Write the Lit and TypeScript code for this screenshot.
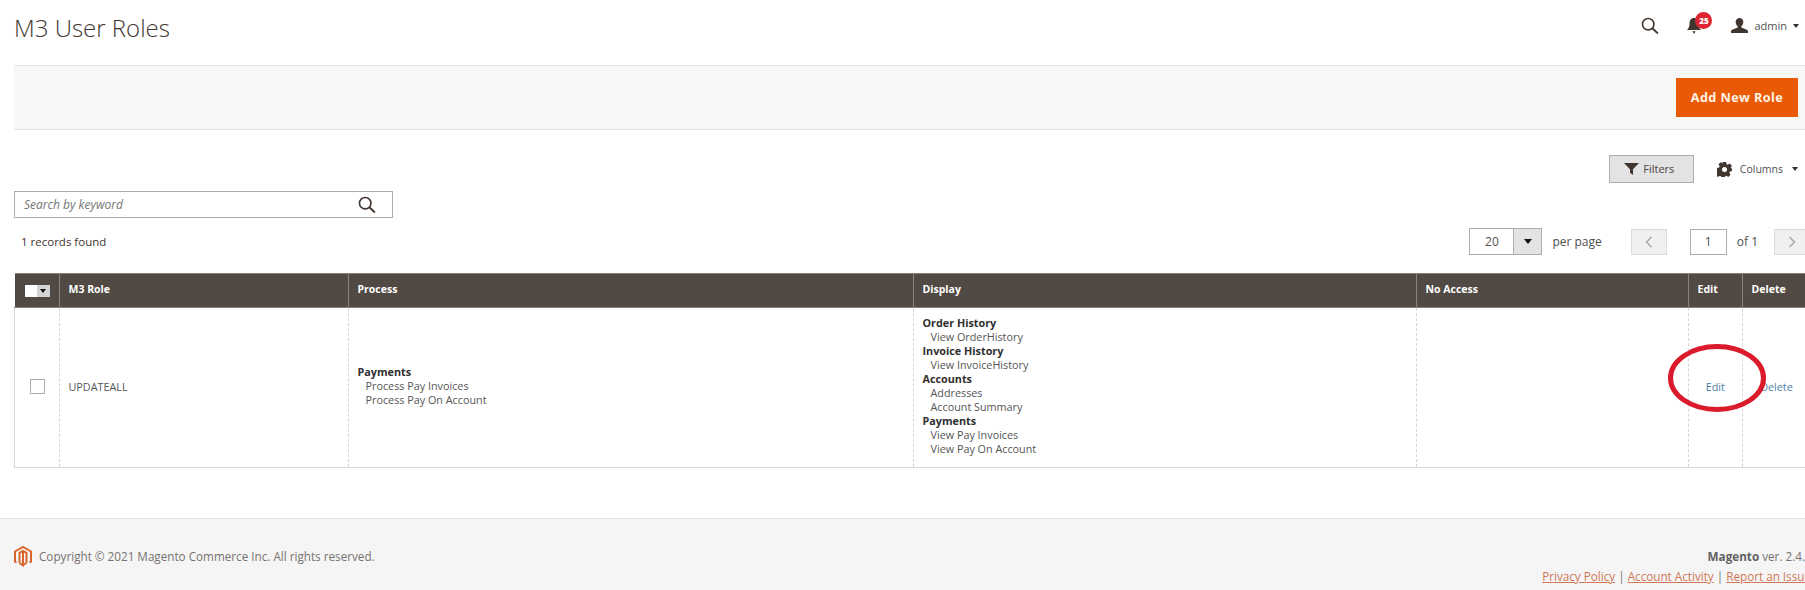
import { LitElement, html, css } from "lit";
import { customElement } from "lit/decorators.js";

const searchIcon = html`<svg width="18" height="17" viewBox="0 0 20 19" fill="none" stroke="#41362f" stroke-width="1.800">
  <circle cx="8" cy="8" r="6.400"></circle><path d="M12.600 12.600 18.800 18.400" stroke-width="2.100"></path></svg>`;

@customElement("app-root")
export class AppRoot extends LitElement {
  static styles = css`
    :host {
      display: block;
      width: 1805px;
      height: 590px;
      overflow: hidden;
      position: relative;
      background: #fff;
      font-family: "Open Sans", sans-serif;
      font-size: 11.5px;
      line-height: 14px;
      color: #41362f;
    }
    .header {
      height: 65px;
      box-sizing: border-box;
      display: flex;
      align-items: center;
      justify-content: space-between;
      padding: 0 6px 9px 14px;
    }
    h1 {
      margin: 0;
      font-size: 24px;
      font-weight: 300;
      line-height: 32px;
      color: #41362f;
    }
    .user-bar { display: flex; align-items: center; margin-bottom: 5px; }
    .bell { position: relative; display: flex; margin: 0 19px 0 28px; width: 25px; }
    .badge {
      position: absolute;
      left: 8px;
      top: -5px;
      width: 17px;
      height: 17px;
      border-radius: 50%;
      background: #dc2530;
      color: #fff;
      font-size: 8px;
      font-weight: 800;
      line-height: 17px;
      text-align: center;
    }
    .admin { font-size: 11px; color: #4f4f4f; margin: 0 6px 0 6px; }
    .caret {
      width: 0;
      height: 0;
      border-left: 3.5px solid transparent;
      border-right: 3.5px solid transparent;
      border-top: 4px solid #303030;
    }
    .actions {
      margin-left: 14px;
      height: 65px;
      box-sizing: border-box;
      background: #f8f8f8;
      border-top: 1px solid #e3e3e3;
      border-bottom: 1px solid #e3e3e3;
      display: flex;
      align-items: center;
      justify-content: flex-end;
      padding: 0 7px 1px 0;
    }
    .add {
      width: 122px;
      height: 39px;
      background: #e95a07;
      color: #fff3e4;
      font-size: 12.7px;
      font-weight: 700;
      letter-spacing: 0.4px;
      display: flex;
      align-items: center;
      justify-content: center;
    }
    .grid-top {
      display: flex;
      justify-content: flex-end;
      align-items: center;
      padding: 25px 7px 0 0;
    }
    .filters {
      width: 85px;
      height: 28px;
      box-sizing: border-box;
      background: #e3e3e3;
      border: 1px solid #adadad;
      display: flex;
      align-items: center;
      justify-content: center;
      gap: 4px;
      padding-right: 4px;
      color: #4a4542;
      font-size: 11px;
      margin-right: 23px;
    }
    .columns { display: flex; align-items: center; color: #4f4f4f; font-size: 10.5px; }
    .columns span { margin: 0 9px 0 8px; }
    .search {
      margin: 8px 0 0 14px;
      width: 379px;
      height: 27px;
      box-sizing: border-box;
      border: 1px solid #adadad;
      display: flex;
      align-items: center;
      justify-content: space-between;
      padding: 0 16px 0 9px;
      font-style: italic;
      color: #757575;
      font-size: 12px;
    }
    .toolbar {
      width: 1810px;
      height: 27px;
      margin-top: 10px;
      display: flex;
      align-items: center;
      justify-content: space-between;
      padding-left: 21px;
      box-sizing: border-box;
    }
    .pager { display: flex; align-items: center; color: #4f4f4f; font-size: 12px; }
    .select {
      width: 73px;
      height: 27px;
      box-sizing: border-box;
      border: 1px solid #adadad;
      display: flex;
    }
    .select b { flex: 1; font-weight: 400; text-align: center; line-height: 25px; }
    .select i {
      width: 27px;
      background: #e3e3e3;
      border-left: 1px solid #adadad;
      display: flex;
      align-items: center;
      justify-content: center;
    }
    .select .caret { border-left-width: 4px; border-right-width: 4px; border-top: 5px solid #111; }
    .per { margin: 0 29px 0 10px; }
    .nav {
      width: 36px;
      height: 26px;
      box-sizing: border-box;
      background: #f0f0f0;
      border: 1px solid #dcdcdc;
      display: flex;
      align-items: center;
      justify-content: center;
    }
    .page-num {
      width: 37px;
      height: 26px;
      box-sizing: border-box;
      border: 1px solid #adadad;
      margin-left: 23px;
      text-align: center;
      line-height: 24px;
    }
    .of { margin: 0 16px 0 10px; }
    table {
      margin: 18px 0 0 14px;
      width: 1796px;
      border-collapse: collapse;
      table-layout: fixed;
    }
    th {
      background: #514943;
      color: #fff;
      height: 34px;
      box-sizing: border-box;
      font-size: 10.5px;
      font-weight: 700;
      text-align: left;
      padding: 0 9px 3px 8.5px;
      border-left: 1px solid #8a837f;
      border-top: 1px solid #8a837f;
      border-bottom: 1px solid #8a837f;
    }
    th:first-child { border-left: none; padding: 0 0 0 10px; }
    td {
      height: 160px;
      box-sizing: border-box;
      padding: 0 9px 2px 8.5px;
      border-left: 1px dashed #d6d6d6;
      border-bottom: 1px solid #d6d6d6;
      vertical-align: middle;
      color: #555;
      font-size: 10.8px;
    }
    td:first-child { border-left: 1px solid #d6d6d6; }
    td.stack { padding-bottom: 4px; }
    td strong { display: block; font-weight: 700; color: #303030; }
    td span { display: block; padding-left: 8px; }
    td a { color: #4e7ea5; text-decoration: none; display: block; text-align: center; }
    .head-check { display: flex; align-items: center; }
    .head-check u { width: 12px; height: 12px; background: #fff; display: block; }
    .head-check em {
      width: 13px;
      height: 12px;
      background: #d4d4d4;
      display: flex;
      align-items: center;
      justify-content: center;
    }
    .head-check .caret { border-top-color: #111; }
    .check {
      width: 13px;
      height: 13px;
      border: 1px solid #adadad;
      margin: 0 auto 0 6px;
    }
    footer {
      position: absolute;
      left: 0;
      top: 518px;
      width: 1805px;
      height: 72px;
      box-sizing: border-box;
      background: #f5f5f5;
      border-top: 1px solid #e3e3e3;
      display: flex;
      justify-content: space-between;
      padding: 27px 0 0 14px;
      color: #77726f;
      font-size: 11.7px;
      line-height: 20px;
    }
    .copy { display: flex; align-items: center; gap: 7px; height: 20px; }
    .legal { text-align: right; margin-right: -6px; }
    .version { padding-right: 6px; }
    .legal strong { font-weight: 700; color: #626262; }
    .legal a { color: #cf7757; text-decoration: underline; }
    .ring { position: absolute; left: 1665px; top: 340px; pointer-events: none; }
  `;

  render() {
    return html`
      <div class="header">
        <h1>M3 User Roles</h1>
        <div class="user-bar">
          ${searchIcon}
          <div class="bell">
            <svg width="14" height="18" viewBox="0 0 14 18" fill="#41362f"><path d="M7 1C4 1 2.600 3.400 2.600 6.200 2.600 9.600 1.600 11.400 0 13h14c-1.600-1.600-2.600-3.400-2.600-6.800C11.400 3.400 10 1 7 1ZM5.400 14.200h3.200L7 17Z"></path></svg>
            <div class="badge">25</div>
          </div>
          <svg width="17" height="15" viewBox="0 0 16 15" preserveAspectRatio="none" fill="#41362f"><path d="M8 0c2.200 0 3.600 1.800 3.600 4 0 1.800-.9 3.400-1.900 4.200v1.400l4.600 2c1 .4 1.700 1 1.700 1.800V15H0v-1.600c0-.8.7-1.400 1.700-1.800l4.600-2V8.200C5.300 7.400 4.400 5.800 4.400 4 4.400 1.800 5.800 0 8 0Z"></path></svg>
          <span class="admin">admin</span>
          <i class="caret"></i>
        </div>
      </div>
      <div class="actions"><div class="add">Add New Role</div></div>
      <div class="grid-top">
        <div class="filters">
          <svg width="15" height="12" viewBox="0 0 15 12" fill="#41362f"><path d="M0 0h15L9 6.200V12L6 9.800V6.200Z"></path></svg>
          Filters
        </div>
        <div class="columns">
          <svg width="15" height="15" viewBox="0 0 24 24" fill="#41362f"><path fill-rule="evenodd" d="M9.500 0h5l.8 3.400 2 .8 3-1.800 3.500 3.500-1.800 3 .8 2L24 9.500v5l-3.400.8-.8 2 1.800 3-3.500 3.500-3-1.800-2 .8-.8 3.200h-5l-.8-3.200-2-.8-3 1.800-3.500-3.500 1.800-3-.8-2L0 14.500v-5l3.400-.8.800-2-1.800-3L5.900 .2l3 1.800Z"></path><circle cx="12" cy="12" r="4" fill="#fff"></circle></svg>
          <span>Columns</span>
          <i class="caret"></i>
        </div>
      </div>
      <div class="search">Search by keyword ${searchIcon}</div>
      <div class="toolbar">
        <div>1 records found</div>
        <div class="pager">
          <div class="select"><b>20</b><i><em class="caret"></em></i></div>
          <div class="per">per page</div>
          <div class="nav">
            <svg width="8" height="12" viewBox="0 0 8 12" fill="none" stroke="#a8a8a8" stroke-width="1.500"><path d="M6.500 1 1.500 6l5 5"></path></svg>
          </div>
          <div class="page-num">1</div>
          <div class="of">of 1</div>
          <div class="nav">
            <svg width="8" height="12" viewBox="0 0 8 12" fill="none" stroke="#a8a8a8" stroke-width="1.500"><path d="M1.500 1l5 5-5 5"></path></svg>
          </div>
        </div>
      </div>
      <table>
        <colgroup>
          <col style="width:45px" /><col style="width:289px" /><col style="width:565px" />
          <col style="width:503px" /><col style="width:272px" /><col style="width:54px" /><col style="width:68px" />
        </colgroup>
        <thead>
          <tr>
            <th><div class="head-check"><u></u><em><i class="caret"></i></em></div></th>
            <th>M3 Role</th>
            <th>Process</th>
            <th>Display</th>
            <th>No Access</th>
            <th>Edit</th>
            <th>Delete</th>
          </tr>
        </thead>
        <tbody>
          <tr>
            <td><div class="check"></div></td>
            <td>UPDATEALL</td>
            <td class="stack">
              <strong>Payments</strong>
              <span>Process Pay Invoices</span>
              <span>Process Pay On Account</span>
            </td>
            <td class="stack">
              <strong>Order History</strong>
              <span>View OrderHistory</span>
              <strong>Invoice History</strong>
              <span>View InvoiceHistory</span>
              <strong>Accounts</strong>
              <span>Addresses</span>
              <span>Account Summary</span>
              <strong>Payments</strong>
              <span>View Pay Invoices</span>
              <span>View Pay On Account</span>
            </td>
            <td></td>
            <td><a>Edit</a></td>
            <td><a>Delete</a></td>
          </tr>
        </tbody>
      </table>
      <footer>
        <div class="copy">
          <svg width="18" height="21" viewBox="0 0 18 21" fill="none" stroke="#d9652b" stroke-width="2">
            <path d="M2.500 16.500 1 15.600V5.500L9 1l8 4.500v10.100l-1.500 .9"></path>
            <path d="M5.500 16.800V6.800L9 4.800l3.500 2v10M9 5v14.200l-3.500-2M9 19.200l3.500-2.400"></path>
          </svg>
          Copyright © 2021 Magento Commerce Inc. All rights reserved.
        </div>
        <div class="legal">
          <div class="version"><strong>Magento</strong> ver. 2.4.</div>
          <div><a>Privacy Policy</a> | <a>Account Activity</a> | <a>Report an Issue</a></div>
        </div>
      </footer>
      <svg class="ring" width="104" height="76" viewBox="0 0 104 76" fill="none">
        <ellipse cx="52" cy="38" rx="46.500" ry="31.500" stroke="#db1a2b" stroke-width="5"></ellipse>
      </svg>
    `;
  }
}
